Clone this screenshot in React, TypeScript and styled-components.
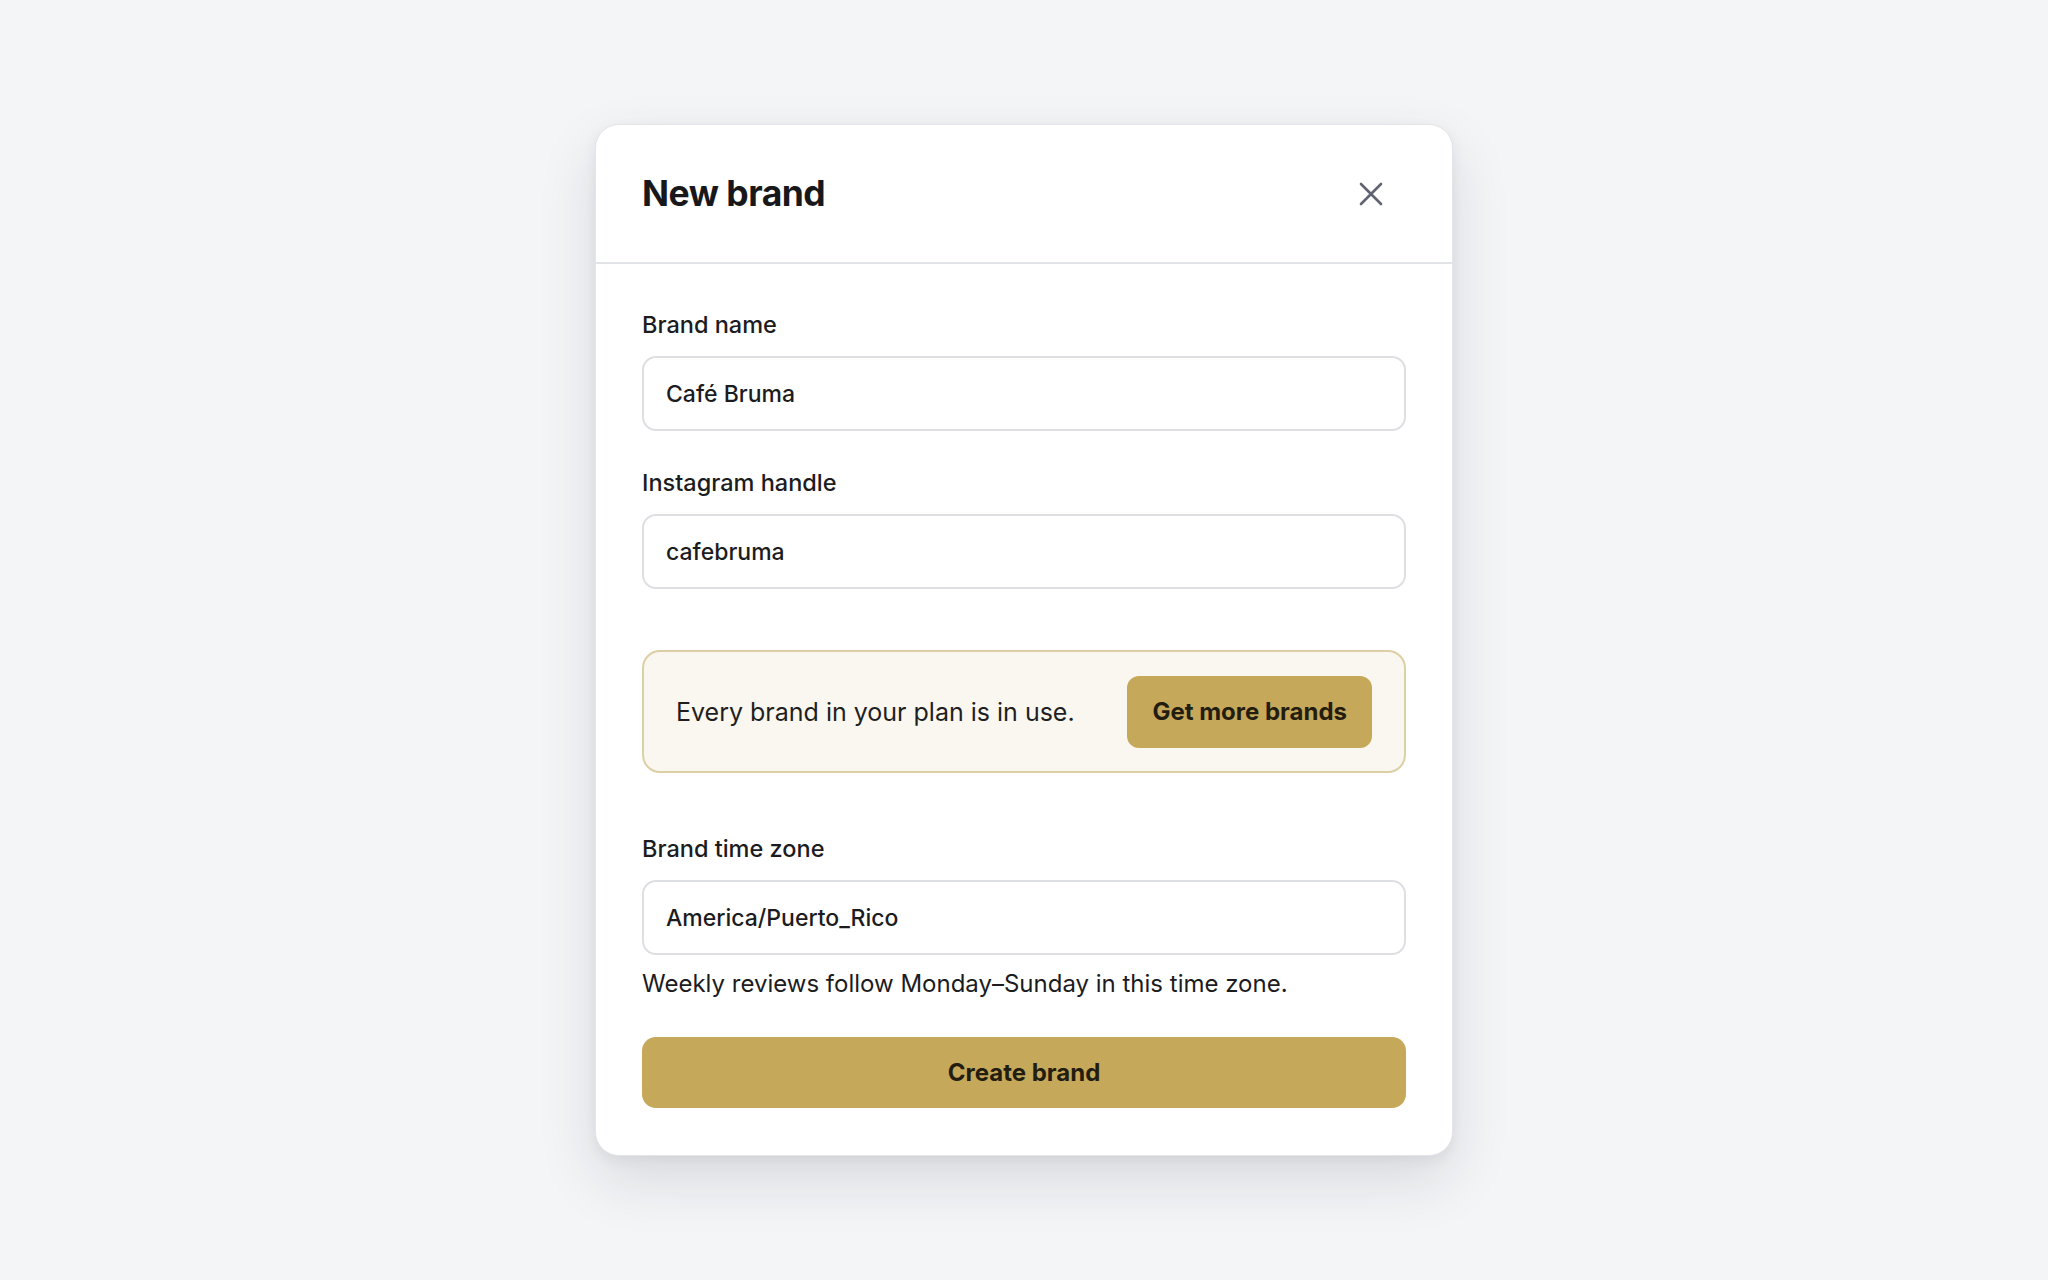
import React from 'react';
import styled, { createGlobalStyle } from 'styled-components';

const GlobalStyle = createGlobalStyle`
  html, body {
    margin: 0;
    padding: 0;
    background: #f4f5f7;
    font-family: Inter, "Noto Sans", "Liberation Sans", sans-serif;
    color: #1c1c1e;
  }
`;

const Page = styled.div`
  min-height: 1280px;
  display: flex;
  align-items: center;
  justify-content: center;
`;

const Modal = styled.div`
  width: 856px;
  background: #ffffff;
  border: 1px solid #e4e5e8;
  border-radius: 24px;
  box-shadow: 0 24px 60px rgba(20, 24, 40, 0.12), 0 4px 14px rgba(20, 24, 40, 0.06);
  overflow: hidden;
`;

const Header = styled.div`
  height: 137px;
  padding: 0 46px;
  display: flex;
  align-items: center;
  justify-content: space-between;
  border-bottom: 2px solid #e2e3e6;
`;

const Title = styled.h2`
  margin: 0;
  font-size: 35.5px;
  font-weight: 700;
  letter-spacing: -0.5px;
  color: #18181b;
`;

const CloseButton = styled.button`
  width: 48px;
  height: 48px;
  margin-right: 11px;
  padding: 0;
  border: none;
  background: none;
  display: flex;
  align-items: center;
  justify-content: center;
  cursor: pointer;
  color: #5f6470;
`;

const Body = styled.div`
  padding: 46px 46px 47px;
  display: flex;
  flex-direction: column;
`;

const Field = styled.div<{ gapAfter?: number }>`
  display: flex;
  flex-direction: column;
  margin-bottom: ${p => p.gapAfter ?? 0}px;
`;

const Label = styled.label`
  font-size: 23.5px;
  line-height: 30px;
  font-weight: 500;
  color: #1c1c1e;
  margin-bottom: 16px;
`;

const Input = styled.input`
  height: 75px;
  box-sizing: border-box;
  padding: 0 22px;
  border: 2px solid #dedfe3;
  border-radius: 14px;
  font-family: inherit;
  font-size: 23px;
  font-weight: 500;
  color: #1c1c1e;
  background: #fff;
  outline: none;
`;

const Notice = styled.div`
  height: 123px;
  box-sizing: border-box;
  margin-bottom: 61px;
  padding: 0 32px;
  display: flex;
  align-items: center;
  justify-content: space-between;
  background: #faf7f0;
  border: 2px solid #dccfa6;
  border-radius: 18px;
`;

const NoticeText = styled.span`
  font-size: 25px;
  color: #1f1f22;
`;

const GoldButton = styled.button<{ block?: boolean }>`
  height: ${p => (p.block ? 71 : 72)}px;
  padding: 0 25px;
  width: ${p => (p.block ? '100%' : 'auto')};
  border: none;
  border-radius: ${p => (p.block ? 14 : 12)}px;
  background: #c6a85a;
  color: #231d10;
  font-family: inherit;
  font-size: 24px;
  font-weight: 700;
  cursor: pointer;
`;

const Helper = styled.p`
  margin: 14px 0 38px;
  font-size: 24px;
  line-height: 30px;
  color: #1c1c1e;
`;

const CloseIcon = () => (
  <svg width="26" height="26" viewBox="0 0 26 26" fill="none">
    <path d="M3 3L23 23M23 3L3 23" stroke="currentColor" strokeWidth="2.6" strokeLinecap="round" />
  </svg>
);

export default function App() {
  return (
    <>
      <GlobalStyle />
      <Page>
        <Modal>
          <Header>
            <Title>New brand</Title>
            <CloseButton aria-label="Close">
              <CloseIcon />
            </CloseButton>
          </Header>
          <Body>
            <Field gapAfter={37}>
              <Label>Brand name</Label>
              <Input defaultValue="Café Bruma" />
            </Field>
            <Field gapAfter={61}>
              <Label>Instagram handle</Label>
              <Input defaultValue="cafebruma" />
            </Field>
            <Notice>
              <NoticeText>Every brand in your plan is in use.</NoticeText>
              <GoldButton>Get more brands</GoldButton>
            </Notice>
            <Field>
              <Label>Brand time zone</Label>
              <Input defaultValue="America/Puerto_Rico" />
            </Field>
            <Helper>Weekly reviews follow Monday–Sunday in this time zone.</Helper>
            <GoldButton block>Create brand</GoldButton>
          </Body>
        </Modal>
      </Page>
    </>
  );
}
